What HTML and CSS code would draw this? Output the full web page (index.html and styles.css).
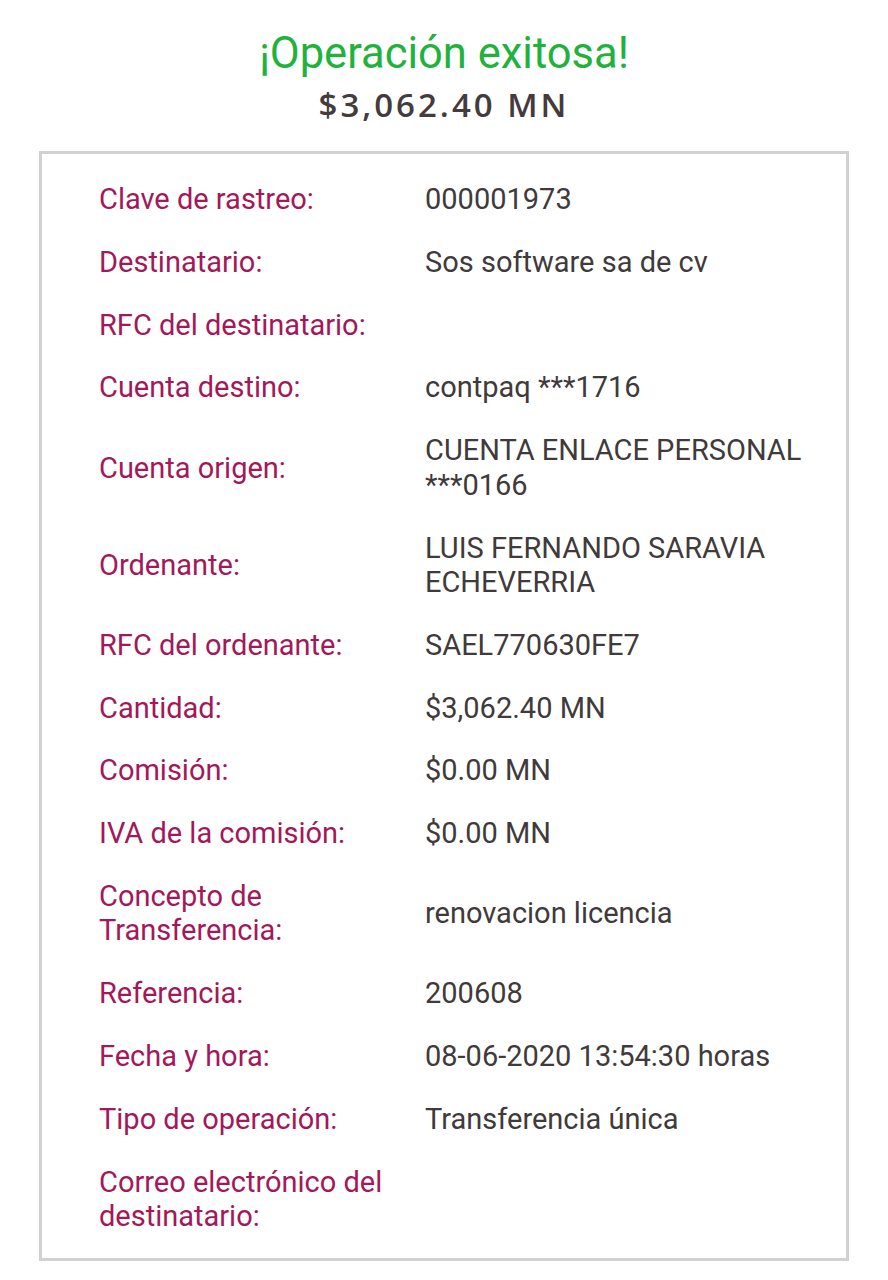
FILE: index.html
```html
<!DOCTYPE html>
<html lang="es">
<head>
<meta charset="utf-8">
<link rel="stylesheet" href="styles.css">
</head>
<body>
<header class="head">
  <h1 class="title">¡Operación exitosa!</h1>
  <div class="amount">$3,062.40 MN</div>
</header>
<section class="box">
  <div class="row"><div class="label">Clave de rastreo:</div><div class="value">000001973</div></div>
  <div class="row"><div class="label">Destinatario:</div><div class="value">Sos software sa de cv</div></div>
  <div class="row"><div class="label">RFC del destinatario:</div><div class="value"></div></div>
  <div class="row"><div class="label">Cuenta destino:</div><div class="value">contpaq ***1716</div></div>
  <div class="row"><div class="label">Cuenta origen:</div><div class="value">CUENTA ENLACE PERSONAL ***0166</div></div>
  <div class="row"><div class="label">Ordenante:</div><div class="value">LUIS FERNANDO SARAVIA ECHEVERRIA</div></div>
  <div class="row"><div class="label">RFC del ordenante:</div><div class="value">SAEL770630FE7</div></div>
  <div class="row"><div class="label">Cantidad:</div><div class="value">$3,062.40 MN</div></div>
  <div class="row"><div class="label">Comisión:</div><div class="value">$0.00 MN</div></div>
  <div class="row"><div class="label">IVA de la comisión:</div><div class="value">$0.00 MN</div></div>
  <div class="row"><div class="label">Concepto de Transferencia:</div><div class="value">renovacion licencia</div></div>
  <div class="row"><div class="label">Referencia:</div><div class="value">200608</div></div>
  <div class="row"><div class="label">Fecha y hora:</div><div class="value">08-06-2020 13:54:30 horas</div></div>
  <div class="row"><div class="label">Tipo de operación:</div><div class="value">Transferencia única</div></div>
  <div class="row"><div class="label">Correo electrónico del destinatario:</div><div class="value"></div></div>
</section>
</body>
</html>
```
FILE: styles.css
```css
html, body {
  margin: 0;
  padding: 0;
  background: #ffffff;
}
body {
  font-family: Roboto, "Liberation Sans", sans-serif;
}
.head {
  display: flex;
  flex-direction: column;
  align-items: center;
  padding-top: 27px;
}
.title {
  margin: 0;
  font-weight: 400;
  font-size: 43.5px;
  line-height: 54px;
  color: #1fb23c;
}
.amount {
  font-family: "Open Sans", sans-serif;
  font-weight: 600;
  font-size: 33px;
  line-height: 48px;
  color: #433b3d;
  letter-spacing: 3px;
}
.box {
  margin: 22px 0 0 39px;
  width: 810px;
  border: 3px solid #d2d2d2;
  padding: 14px 30px 10px 57px;
  box-sizing: border-box;
}
.row {
  display: grid;
  grid-template-columns: 312px 1fr;
  column-gap: 14px;
  align-items: center;
  padding: 14.15px 0;
  font-size: 29px;
  line-height: 34.5px;
}
.label {
  color: #a3185a;
}
.value {
  color: #403a3c;
}
```
